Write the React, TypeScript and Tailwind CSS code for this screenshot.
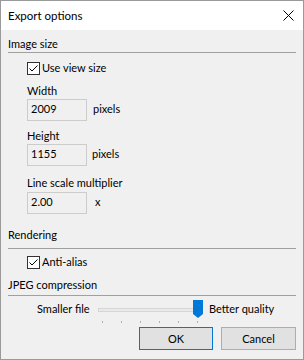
import React from "react";

const font = { fontFamily: 'Lato, "Noto Sans", sans-serif' };

function CheckBox({ label }: { label: string }) {
  return (
    <div className="flex h-[16px] items-center">
      <svg width="13" height="13" viewBox="0 0 13 13" className="shrink-0">
        <rect x="0.5" y="0.5" width="12" height="12" fill="#fff" stroke="#333" />
        <path d="M2.5 6.5 L5 9 L10.5 3.5" fill="none" stroke="#000" strokeWidth="1" />
      </svg>
      <span className="ml-[2px] leading-[16px]">{label}</span>
    </div>
  );
}

function NumberBox({ value, unit, unitGap }: { value: string; unit: string; unitGap: string }) {
  return (
    <div className="flex items-start">
      <div className="h-[22px] w-[60px] border border-[#cccccc] bg-[#f0f0f0] pl-[3px] pt-[1px] leading-[16px]">
        {value}
      </div>
      <span className={`${unitGap} pt-[2px] leading-[16px]`}>{unit}</span>
    </div>
  );
}

function SectionHeader({ title, height }: { title: string; height: string }) {
  return (
    <div className={`${height} border-b border-[#a0a0a0] leading-[16px]`}>{title}</div>
  );
}

function Slider() {
  const ticks = [6, 25, 44, 63, 82, 101];
  return (
    <svg width="110" height="24" viewBox="0 0 110 24" className="shrink-0">
      <rect x="2.5" y="8.5" width="98" height="3" fill="#e7eaea" stroke="#d6d6d6" />
      {ticks.map((t) => (
        <rect key={t} x={t} y="21" width="1" height="2" fill="#b0b0b0" />
      ))}
      <path d="M97 0 H107 V14 L102 18 L97 14 Z" fill="#0078d7" />
    </svg>
  );
}

export default function App() {
  return (
    <div
      className="flex h-[360px] w-[304px] flex-col border border-[#9a9a9a] bg-[#f0f0f0] text-[11px] text-black"
      style={font}
    >
      <div className="flex h-[29px] shrink-0 items-center justify-between bg-white pl-[7px] pr-[9px]">
        <span className="text-[11.5px] leading-[16px]">Export options</span>
        <svg width="11" height="11" viewBox="0 0 11 11">
          <path d="M0.5 0.5 L10.5 10.5 M10.5 0.5 L0.5 10.5" stroke="#000" strokeWidth="1" />
        </svg>
      </div>

      <div className="flex flex-1 flex-col px-[7px]">
        <div className="mt-[6px]">
          <SectionHeader title="Image size" height="h-[17px]" />
        </div>

        <div className="pl-[19px]">
          <div className="mt-[7px]">
            <CheckBox label="Use view size" />
          </div>
          <div className="mt-[7px] leading-[16px]">Width</div>
          <NumberBox value="2009" unit="pixels" unitGap="ml-[6px]" />
          <div className="mt-[7px] leading-[16px]">Height</div>
          <NumberBox value="1155" unit="pixels" unitGap="ml-[5px]" />
          <div className="mt-[9px] leading-[16px]">Line scale multiplier</div>
          <div className="mt-[1px]">
            <NumberBox value="2.00" unit="x" unitGap="ml-[8px]" />
          </div>
        </div>

        <div className="mt-[13px]">
          <SectionHeader title="Rendering" height="h-[22px]" />
        </div>
        <div className="mt-[5px] pl-[19px]">
          <CheckBox label="Anti-alias" />
        </div>

        <div className="mt-[7px]">
          <SectionHeader title="JPEG compression" height="h-[19px]" />
        </div>

        <div className="mt-[4px] flex h-[24px] items-start">
          <span className="ml-[29px] mt-[1px] w-[59px] leading-[16px]">Smaller file</span>
          <Slider />
          <span className="ml-[3px] mt-[1px] leading-[16px]">Better quality</span>
        </div>

        <div className="mt-[3px] flex justify-end gap-[8px]">
          <button className="h-[23px] w-[74px] border border-[#0078d7] bg-[#e1e1e1] leading-[16px]">
            OK
          </button>
          <button className="h-[23px] w-[75px] border border-[#adadad] bg-[#e1e1e1] leading-[16px]">
            Cancel
          </button>
        </div>
      </div>
    </div>
  );
}
